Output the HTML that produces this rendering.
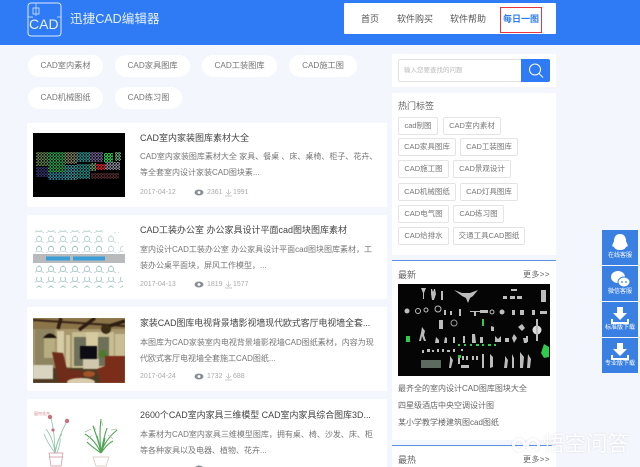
<!DOCTYPE html>
<html><head><meta charset="utf-8"><style>
*{box-sizing:border-box;margin:0;padding:0}
html,body{width:640px;height:467px;overflow:hidden}
body{background:#f3f6fc;position:relative;font-family:"Liberation Sans","Noto Sans CJK SC",sans-serif;color:#666}
#w{position:absolute;left:0;top:0;width:640px;height:467px;filter:blur(.35px)}
.a{position:absolute;white-space:nowrap}
.pill{position:absolute;background:#fff;border-radius:11px;height:22px;line-height:22px;text-align:center;font-size:8.2px;color:#777;white-space:nowrap}
.card{position:absolute;left:27px;width:360px;background:#fff}
.title{position:absolute;left:113px;font-size:9px;color:#444;white-space:nowrap;line-height:12px}
.desc{position:absolute;left:113px;width:240px;font-size:8px;line-height:15.5px;color:#777;white-space:nowrap}
.meta{position:absolute;font-size:7px;color:#aaa;white-space:nowrap;line-height:10px}
.img{position:absolute;left:6px;width:92px;overflow:hidden}
.tag{position:absolute;height:18px;line-height:16px;border:1px solid #e4e4e4;border-radius:2px;text-align:center;font-size:7.5px;color:#777;white-space:nowrap;background:#fff}
.fl{position:absolute;left:602px;width:36px;height:35px;background:#3a80e2;color:#fff;font-size:6px;text-align:center}
.fl span{position:absolute;left:0;right:0;top:22px;line-height:8px;white-space:nowrap}
.fl svg{position:absolute;left:8px;top:3px}
</style></head><body><div id="w">
<div class="a" style="left:0;top:0;width:640px;height:45px;background:#2f7bf5"></div>
<svg class="a" style="left:27px;top:2px" width="36" height="35" viewBox="0 0 36 35" fill="none" stroke="#dbe8fd" stroke-width="1">
<rect x="1" y="1" width="33" height="33" rx="3"/><path d="M1 15H6M30 15H34M9 1V14" stroke-width=".7"/><rect x="6" y="6" width="6" height="6" stroke-width=".8"/>
</svg>
<div class="a" style="left:29px;top:15px;font-size:14px;line-height:18px;color:#e9f1fe">CAD</div>
<div class="a" style="left:70px;top:10px;font-size:12.6px;line-height:18px;color:#e6effe">迅捷CAD编辑器</div>
<div class="a" style="left:344px;top:3px;width:212px;height:31px;background:#fff;border-radius:1px"></div>
<div class="a" style="left:361px;top:13px;font-size:9px;line-height:12px;color:#555">首页</div>
<div class="a" style="left:397px;top:13px;font-size:9px;line-height:12px;color:#555">软件购买</div>
<div class="a" style="left:450px;top:13px;font-size:9px;line-height:12px;color:#555">软件帮助</div>
<div class="a" style="left:500px;top:7px;width:42px;height:26px;border:1px solid #e8353f"></div>
<div class="a" style="left:503px;top:13px;font-size:9px;line-height:12px;color:#2f7bf5;font-weight:bold">每日一图</div>

<div class="pill" style="left:28px;top:55px;width:75px">CAD室内素材</div>
<div class="pill" style="left:115px;top:55px;width:75px">CAD家具图库</div>
<div class="pill" style="left:202px;top:55px;width:75px">CAD工装图库</div>
<div class="pill" style="left:289px;top:55px;width:68px">CAD施工图</div>
<div class="pill" style="left:28px;top:87px;width:75px">CAD机械图纸</div>
<div class="pill" style="left:115px;top:87px;width:67px">CAD练习图</div>

<div class="card" style="top:123px;height:84px">
<svg class="img" style="top:10px;height:64px" width="92" height="64" viewBox="0 0 92 64"><defs><pattern id="d" width="3" height="3" patternUnits="userSpaceOnUse"><rect width="1.6" height="1.6" fill="#000"/><rect x="1.8" y="1.8" width="1" height="1" fill="#000"/></pattern></defs><rect width="92" height="64" fill="#000"/>
<rect x="3" y="19" width="12" height="14" fill="#5c7a4a"/><rect x="15" y="19" width="17" height="20" fill="#2f9a4a"/><rect x="32" y="19" width="12" height="12" fill="#7a7a5a"/><rect x="44" y="19" width="13" height="10" fill="#2d8a8a"/><rect x="57" y="19" width="13" height="10" fill="#6a5a86"/><rect x="71" y="20" width="9" height="9" fill="#2fce5a"/><rect x="82" y="19" width="6" height="9" fill="#6aa07a"/><rect x="3" y="34" width="12" height="10" fill="#33336a"/><rect x="15" y="39" width="17" height="8" fill="#2d7d90"/><rect x="32" y="32" width="12" height="15" fill="#3d8a90"/><rect x="44" y="31" width="13" height="15" fill="#2d8580"/><rect x="57" y="30" width="6" height="8" fill="#669966"/><rect x="63" y="31" width="9" height="6" fill="#e01f33"/><rect x="72" y="29" width="15" height="8" fill="#889"/><rect x="58" y="40" width="28" height="6" fill="#552a30"/>
<rect x="3" y="19" width="85" height="29" fill="url(#d)"/></svg>
<div class="title" style="top:9px">CAD室内家装图库素材大全</div>
<div class="desc" style="top:26px">CAD室内家装图库素材大全 家具、餐桌 、床、桌椅、柜子、花卉、<br>等全套室内设计家装CAD图块素...</div>
<div class="meta" style="left:113px;top:65px">2017-04-12</div>
<svg class="a" style="left:167px;top:66px" width="10" height="7" viewBox="0 0 10 7"><ellipse cx="5" cy="3.5" rx="4.5" ry="3" fill="#8a8f95"/><circle cx="5" cy="3.5" r="1.4" fill="#fff"/></svg>
<div class="meta" style="left:180px;top:65px">2361</div>
<svg class="a" style="left:198px;top:66px" width="7" height="8" viewBox="0 0 7 8" fill="none" stroke="#bbb" stroke-width=".7"><path d="M3.5 0v5M1 3l2.500 2.500L6 3M0 7h7"/></svg>
<div class="meta" style="left:206px;top:65px">1991</div>
</div>

<div class="card" style="top:215px;height:84px">
<svg class="img" style="top:10px;height:66px" width="92" height="66" viewBox="0 0 92 66"><defs><pattern id="f" width="12" height="10" patternUnits="userSpaceOnUse"><circle cx="6" cy="4" r="2.600" fill="none" stroke="#8fbfae" stroke-width=".7"/><path d="M1 8l3-2M11 8L8 6M6 0v2" stroke="#a6b4d6" stroke-width=".6"/></pattern></defs><rect width="92" height="66" fill="#fff"/>
<rect x="2" y="5" width="68" height="20" fill="url(#f)" opacity=".85"/><rect x="75" y="7" width="11" height="14" fill="url(#f)" opacity=".7"/>
<rect x="2" y="21" width="88" height="7" fill="url(#f)" opacity=".7"/>
<rect x="2" y="39" width="84" height="10" fill="url(#f)"/><rect x="2" y="52" width="88" height="11" fill="url(#f)"/>
<rect y="29" width="92" height="9" fill="#b8babc"/><rect x="13" y="31.500" width="24" height="4" fill="#3c9ed8"/><rect x="40" y="31.500" width="32" height="4" fill="#3c9ed8"/>
</svg>
<div class="title" style="top:9px">CAD工装办公室 办公家具设计平面cad图块图库素材</div>
<div class="desc" style="top:27px">室内设计CAD工装办公室 办公家具设计平面cad图块图库素材，工<br>装办公桌平面块，屏风工作模型，...</div>
<div class="meta" style="left:113px;top:65px">2017-04-13</div>
<svg class="a" style="left:167px;top:66px" width="10" height="7" viewBox="0 0 10 7"><ellipse cx="5" cy="3.5" rx="4.5" ry="3" fill="#8a8f95"/><circle cx="5" cy="3.5" r="1.4" fill="#fff"/></svg>
<div class="meta" style="left:180px;top:65px">1819</div>
<svg class="a" style="left:198px;top:66px" width="7" height="8" viewBox="0 0 7 8" fill="none" stroke="#bbb" stroke-width=".7"><path d="M3.5 0v5M1 3l2.500 2.500L6 3M0 7h7"/></svg>
<div class="meta" style="left:206px;top:65px">1577</div>
</div>

<div class="card" style="top:307px;height:84px">
<svg class="img" style="top:11px;height:65px" width="92" height="65" viewBox="0 0 92 65"><rect width="92" height="65" fill="#a8976e"/>
<g style="filter:blur(.5px)"><rect width="92" height="11" fill="#8a7448"/><path d="M0 2L92 8" stroke="#3a2618" stroke-width="2"/><path d="M28 0l-3 11M62 0L46 12M92 3L70 10" stroke="#2e1d12" stroke-width="3.500"/>
<rect x="2" y="11" width="20" height="40" fill="#8f8460"/><path d="M10 20q7-9 14 0z" fill="#1c140c"/><rect x="24" y="13" width="7" height="40" fill="#d6cda7"/><rect x="11" y="20" width="11" height="20" fill="#b6ad80"/>
<rect x="33" y="17" width="4" height="32" fill="#cfc59c"/><rect x="39" y="14" width="42" height="36" fill="#c8bd92"/><rect x="41" y="19" width="12" height="29" fill="#6e7058"/><rect x="65" y="19" width="11" height="29" fill="#6e7058"/><rect x="53" y="14" width="12" height="14" fill="#d6cba0"/>
<rect x="47" y="28" width="17" height="13" fill="#0c0c12"/><circle cx="73" cy="11" r="5" fill="#3b2c14"/><circle cx="70" cy="36" r="4" fill="#4e7a2e"/><rect x="82" y="16" width="10" height="25" fill="#cabf94"/>
<rect y="50" width="92" height="15" fill="#4e3a22"/><rect x="50" y="41" width="16" height="10" fill="#cfc8ae"/><path d="M19 34l11 1 4 16 15 2 1 8-24 4z" fill="#702c1a"/><path d="M72 38h20v27H68l-4-14 8-3z" fill="#7a2d18"/><rect x="0" y="47" width="20" height="14" fill="#d8d4c0"/><ellipse cx="48" cy="64" rx="14" ry="4" fill="#d9cbae"/><ellipse cx="56" cy="56" rx="6" ry="3" fill="#a5522a"/></g></svg>
<div class="title" style="top:10px;font-size:8.9px">家装CAD图库电视背景墙影视墙现代欧式客厅电视墙全套...</div>
<div class="desc" style="top:28px">本图库为CAD家装室内电视背景墙影视墙CAD图纸素材，内容为现<br>代欧式客厅电视墙全套施工CAD图纸...</div>
<div class="meta" style="left:113px;top:65px">2017-04-24</div>
<svg class="a" style="left:167px;top:66px" width="10" height="7" viewBox="0 0 10 7"><ellipse cx="5" cy="3.5" rx="4.5" ry="3" fill="#8a8f95"/><circle cx="5" cy="3.5" r="1.4" fill="#fff"/></svg>
<div class="meta" style="left:180px;top:65px">1732</div>
<svg class="a" style="left:198px;top:66px" width="7" height="8" viewBox="0 0 7 8" fill="none" stroke="#bbb" stroke-width=".7"><path d="M3.5 0v5M1 3l2.500 2.500L6 3M0 7h7"/></svg>
<div class="meta" style="left:206px;top:65px">688</div>
</div>

<div class="card" style="top:399px;height:68px">
<svg class="img" style="top:11px;height:57px" width="92" height="57" viewBox="0 0 92 57"><rect width="92" height="57" fill="#fff"/>
<text x="1" y="5" font-size="4" fill="#c88" font-family="Liberation Sans,Noto Sans CJK SC,sans-serif">窗帘花卉</text>
<g fill="none" stroke="#8fc4a8" stroke-width=".8"><path d="M22 43Q20 28 13 19M22 43Q22 25 18 8M22 43Q25 28 33 13M22 43Q24 30 29 24M22 43Q14 32 11 24M24 43Q28 32 27 28"/></g>
<g fill="#c86f7c"><circle cx="17" cy="7" r="2.200"/><circle cx="34" cy="11" r="2.200"/><circle cx="20" cy="20" r="1.600"/></g>
<g fill="none" stroke="#cf8f96" stroke-width=".7"><path d="M16 43h14l-2 13H18zM16 47h14"/></g>
<g fill="none" stroke="#4fa455" stroke-width="1.100"><path d="M68 43Q62 30 52 24M68 43Q66 24 68 9M68 43Q72 30 84 20M68 43Q58 36 54 32M68 43Q74 34 80 31M68 43Q66 32 60 16M68 43Q70 30 74 18M68 43Q67 36 64 26M68 43Q70 38 72 28"/></g>
<g fill="none" stroke="#a9bfa8" stroke-width=".7"><path d="M52 22l6-3M68 10l2 6M84 19l-6 1M60 15l3 5M54 30l5-5M80 29l-5-4"/></g>
<g fill="none" stroke="#d8c2bb" stroke-width=".7"><path d="M60 47h16l-3 9H63z"/></g>
</svg>
<div class="title" style="top:10px;font-size:8.95px">2600个CAD室内家具三维模型 CAD室内家具综合图库3D...</div>
<div class="desc" style="top:28px">本素材为CAD室内家具三维模型图库，拥有桌、椅、沙发、床、柜<br>等各种家具以及电器、植物、花卉...</div>
<svg class="a" style="left:167px;top:66px" width="10" height="7" viewBox="0 0 10 7"><ellipse cx="5" cy="3.5" rx="4.5" ry="3" fill="#8a8f95"/></svg>
</div>

<div class="a" style="left:392px;top:54px;width:164px;height:33px;background:#fff"></div>
<div class="a" style="left:398px;top:59px;width:124px;height:23px;background:#fff;border:1px solid #e2e2e2;border-radius:2px 0 0 2px;font-size:6.5px;line-height:21px;padding-left:5px;color:#bbb">输入您要查找的问题</div>
<div class="a" style="left:521px;top:59px;width:29px;height:23px;background:#2f7bf5;border-radius:0 2px 2px 0"></div>
<svg class="a" style="left:528px;top:62px" width="16" height="17" viewBox="0 0 16 17" fill="none" stroke="#fff" stroke-width="1"><circle cx="7" cy="7.500" r="5.500"/><path d="M11 11.500l4 4"/></svg>

<div class="a" style="left:392px;top:93px;width:164px;height:162px;background:#fff"></div>
<div class="a" style="left:398px;top:100px;font-size:9px;line-height:13px;color:#666">热门标签</div>
<div class="tag" style="left:398px;top:117px;width:40px">cad制图</div>
<div class="tag" style="left:443px;top:117px;width:58px">CAD室内素材</div>
<div class="tag" style="left:398px;top:138px;width:58px">CAD家具图库</div>
<div class="tag" style="left:460px;top:138px;width:58px">CAD工装图库</div>
<div class="tag" style="left:398px;top:160px;width:51px">CAD施工图</div>
<div class="tag" style="left:453px;top:160px;width:58px">CAD景观设计</div>
<div class="tag" style="left:398px;top:183px;width:58px">CAD机械图纸</div>
<div class="tag" style="left:460px;top:183px;width:58px">CAD灯具图库</div>
<div class="tag" style="left:398px;top:205px;width:51px">CAD电气图</div>
<div class="tag" style="left:453px;top:205px;width:51px">CAD练习图</div>
<div class="tag" style="left:398px;top:227px;width:51px">CAD给排水</div>
<div class="tag" style="left:453px;top:227px;width:72px">交通工具CAD图纸</div>

<div class="a" style="left:392px;top:260px;width:164px;height:180px;background:#fff;border-top:1px solid #5d8fe0"></div>
<div class="a" style="left:398px;top:269px;font-size:9px;line-height:13px;color:#666">最新</div>
<div class="a" style="left:523px;top:269px;font-size:8px;line-height:12px;letter-spacing:.4px;color:#666">更多&gt;&gt;</div>
<svg class="a" style="left:398px;top:284px" width="152" height="92" viewBox="0 0 152 92"><rect width="152" height="92" fill="#050505"/>
<g fill="#bdbdbd"><path d="M23 4h5l-2 5v6h-1V9zM33 5h1l1 3 1-3h1l1 5-2 6h-2l-1-6zM43 7h2v9h-2zM56 6l8 3h8l8-3-5 6-3 2-2 5-2-5-4-2zM113 5h6v2h-6zM105 12h4v3h-4zM112 12h5v3h-5zM119 12h5v3h-5zM143 6h5v12h-5z"/>
<circle cx="9" cy="27" r="2.500"/><circle cx="20" cy="27" r="2.500" fill="none" stroke="#bdbdbd"/><circle cx="28" cy="26" r="2" fill="none" stroke="#bdbdbd"/><circle cx="40" cy="25" r="3" fill="none" stroke="#bdbdbd"/><rect x="46" y="26" width="2" height="5"/><rect x="52" y="27" width="2" height="4"/><rect x="61" y="25" width="2" height="7"/><path d="M72 27h10v1h-4v4h-2v-4h-4z"/><rect x="82" y="26" width="8" height="3"/><circle cx="94" cy="28" r="2" fill="none" stroke="#bdbdbd"/><circle cx="104" cy="28" r="2.500"/><rect x="114" y="26" width="3" height="5"/><rect x="122" y="26" width="4" height="5"/><rect x="134" y="26" width="3" height="5"/><rect x="142" y="27" width="7" height="3"/>
<rect x="41" y="36" width="4" height="9"/><circle cx="56" cy="39" r="3" fill="none" stroke="#999"/><path d="M24 43l3 4-1 4 2 6h-2l-2-5-1 5h-2l2-8zM38 53l3 3v3h-4zM47 53l2 1v5h-3zM55 53h2v6h-2zM65 52h2v7h-2zM74 50h3l1 9h-4zM82 53h3v6h-3zM97 52l3 3 3-3v6h-6zM107 54h4v4h-4zM116 50l3 4-3 5-2-5zM125 54h3l1 5h-3zM93 42l3 1v4h-3zM120 43l4-3 3 4-3 3zM128 52h2v6h-2z"/>
<path d="M24 66h2v3h-2zM29 65h3v3h-3zM34 66h2v2h-2zM39 65h2v3h-2zM44 65h2v3h-2zM49 66h3v2h-3zM55 65h2v3h-2zM60 72h2v8h-2zM64 72h2v4h-2zM68 72h2v4h-2zM74 72h2v4h-2zM78 72h2v4h-2zM84 70h2v14h-2zM52 72l3 4-2 8h-2l1-8zM92 70l3 3v10l-3 1zM107 72l3 4-1 8h-3l1-8zM114 70l2 4v10h-2zM122 68l4 5-1 11h-3zM130 70l3 5-1 9h-3z"/><rect x="23" y="76" width="20" height="8" fill="#5c6a60"/><rect x="63" y="81" width="8" height="3"/><rect x="63" y="65" width="2" height="2"/></g>
<circle cx="139" cy="46" r="4.500" fill="#ddd"/><rect x="138" y="35" width="2" height="22" fill="#bbb"/>
<g fill="#2ecb4e"><rect x="8" y="52" width="4" height="6"/><rect x="84" y="35" width="2" height="7"/><path d="M60 60h2v2h-2zM66 60h2v2h-2zM72 60h2v2h-2zM78 60h3v2h-3zM84 60h2v2h-2zM90 60h3v2h-3zM96 60h2v2h-2zM60 71h3v3h-3z"/><path d="M146 60l5 3v10l-5 1-3-5z"/></g></svg>
<div class="a" style="left:398px;top:383px;font-size:8px;line-height:12px;color:#666">最齐全的室内设计CAD图库图块大全</div>
<div class="a" style="left:398px;top:400px;font-size:8px;line-height:12px;color:#666">四星级酒店中央空调设计图</div>
<div class="a" style="left:398px;top:417px;font-size:8px;line-height:12px;color:#666">某小学教学楼建筑图cad图纸</div>

<div class="a" style="left:392px;top:445px;width:164px;height:22px;background:#fff;border-top:1px solid #5d8fe0"></div>
<div class="a" style="left:398px;top:454px;font-size:9px;line-height:13px;color:#666">最热</div>
<div class="a" style="left:523px;top:454px;font-size:8px;line-height:12px;letter-spacing:.4px;color:#666">更多&gt;&gt;</div>

<div class="fl" style="top:230px"><svg width="20" height="20" viewBox="0 0 20 20" fill="#fff"><path d="M10 1c4 0 6 3 6 7l2 5-2 1c-1 2-3 3-6 3s-5-1-6-3l-2-1 2-5c0-4 2-7 6-7z"/></svg><span>在线客服</span></div>
<div class="fl" style="top:266px"><svg width="20" height="20" viewBox="0 0 20 20" fill="#fff"><ellipse cx="8" cy="8" rx="7" ry="6"/><ellipse cx="14" cy="13" rx="6" ry="5" stroke="#3a80e2"/><circle cx="12" cy="13" r=".9" fill="#3a80e2"/><circle cx="16" cy="13" r=".9" fill="#3a80e2"/></svg><span>微信客服</span></div>
<div class="fl" style="top:302px"><svg width="20" height="20" viewBox="0 0 20 20" fill="#fff"><path d="M7 2h6v6h4l-7 7-7-7h4z"/><path d="M2 14v4h16v-4" fill="none" stroke="#fff" stroke-width="2"/></svg><span>标准版下载</span></div>
<div class="fl" style="top:338px"><svg width="20" height="20" viewBox="0 0 20 20" fill="#fff"><path d="M7 2h6v6h4l-7 7-7-7h4z"/><path d="M2 14v4h16v-4" fill="none" stroke="#fff" stroke-width="2"/></svg><span>专业版下载</span></div>

<div class="a" style="left:543px;top:431px;font-size:21.500px;line-height:26px;color:#fff;opacity:.9;text-shadow:0 0 2px rgba(0,0,0,.14)">悟空问答</div>
<svg class="a" style="left:511px;top:436px;opacity:.9;filter:drop-shadow(0 0 1px rgba(0,0,0,.12))" width="30" height="18" viewBox="0 0 30 18" fill="none" stroke="#fff" stroke-width="3"><circle cx="8" cy="9" r="5.500"/><circle cx="22" cy="9" r="5.500"/></svg>
</div></body></html>
